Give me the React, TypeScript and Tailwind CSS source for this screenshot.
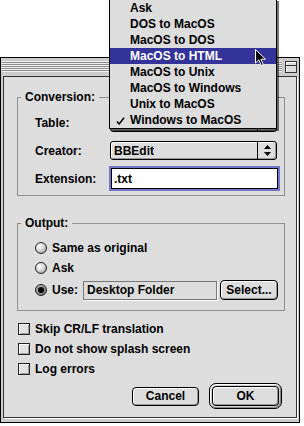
import React from 'react'

const menuItems = [
  'Ask',
  'DOS to MacOS',
  'MacOS to DOS',
  'MacOS to HTML',
  'MacOS to Unix',
  'MacOS to Windows',
  'Unix to MacOS',
  'Windows to MacOS',
]

function Radio({ checked }: { checked?: boolean }) {
  return (
    <span
      className={
        checked
          ? 'flex h-[12px] w-[12px] items-center justify-center rounded-full border border-[#222] bg-[radial-gradient(circle_at_35%_30%,#bbbbbb_0%,#8a8a8a_60%,#555555_100%)]'
          : 'flex h-[12px] w-[12px] items-center justify-center rounded-full border border-[#222] bg-[radial-gradient(circle_at_35%_30%,#ffffff_0%,#dadada_45%,#8a8a8a_100%)]'
      }
    >
      {checked && <span className="h-[6px] w-[6px] rounded-full bg-black" />}
    </span>
  )
}

function Checkbox({ label }: { label: string }) {
  return (
    <div className="flex h-[16px] items-center gap-[5px]">
      <span className="h-[12px] w-[12px] border border-[#222] bg-[#e2e2e2] shadow-[inset_1px_1px_0_#fff,inset_-1px_-1px_0_#a0a0a0]" />
      <span>{label}</span>
    </div>
  )
}

function Popup({ value }: { value?: string }) {
  return (
    <div className="flex h-[19px] w-[167px] items-stretch rounded-[3px] border border-black bg-[#dddddd] shadow-[inset_1px_1px_0_#fff,inset_-1px_-1px_0_#999]">
      <div className="flex flex-1 items-center pl-[3px]">{value}</div>
      <div className="flex w-[19px] items-center justify-center border-l border-black">
        <svg width="7" height="11" viewBox="0 0 7 11">
          <path d="M3.5 0 L7 4 L0 4 Z" fill="#000" />
          <path d="M0 7 L7 7 L3.5 11 Z" fill="#000" />
        </svg>
      </div>
    </div>
  )
}

function Cursor() {
  return (
    <svg width="12" height="18" viewBox="0 0 12 18" className="absolute left-[255px] top-[49px]">
      <path d="M0.5 0.5 L0.5 14 L3.8 10.8 L6.3 16.5 L8.3 15.6 L5.9 10.2 L10.5 10.2 Z" fill="#000" stroke="#fff" strokeWidth="1" />
    </svg>
  )
}

export default function App() {
  return (
    <div className="relative h-[426px] w-[304px] overflow-hidden bg-white font-['Liberation_Sans',Arial,sans-serif] text-[12px] font-bold leading-[16px] text-black">
      {/* window */}
      <div className="mt-[57px] flex h-[366px] w-[300px] flex-col border border-black bg-[#cccccc]">
        <div className="flex h-[17px] items-center gap-[3px] pl-[1px] pr-[2px]">
          <div className="h-[11px] flex-1 bg-[repeating-linear-gradient(to_bottom,#f2f2f2_0px,#f2f2f2_1px,#8c8c8c_1px,#8c8c8c_2px)]" />
          <div className="flex h-[12px] w-[12px] flex-col border border-[#333] bg-[#dddddd] shadow-[inset_1px_1px_0_#fff]">
            <div className="h-[4px] border-b border-[#333]" />
          </div>
        </div>
        <div className="mx-[2px] mb-[4px] mt-[1px] flex flex-1 flex-col border border-[#333] bg-[#dddddd] shadow-[1px_1px_0_#fff]">
          <fieldset className="ml-[13px] mt-[12px] w-[268px] border border-[#8f8f8f]">
            <legend className="ml-[3px] px-[4px]">Conversion:</legend>
            <div className="flex flex-col pl-[17px] pt-[8px] pb-[4px]">
              <div className="flex h-[19px] items-center">
                <span className="w-[75px]">Table:</span>
                <Popup />
              </div>
              <div className="mt-[9px] flex h-[19px] items-center">
                <span className="w-[75px]">Creator:</span>
                <Popup value="BBEdit" />
              </div>
              <div className="mt-[6px] flex h-[25px] items-center">
                <span className="w-[74px]">Extension:</span>
                <div className="flex h-[25px] w-[171px] items-center border-2 border-[#7575c8] bg-white pl-[3px] shadow-[inset_0_0_0_1px_#000]">
                  .txt
                </div>
              </div>
            </div>
          </fieldset>

          <fieldset className="ml-[13px] mt-[19px] w-[268px] border border-[#8f8f8f]">
            <legend className="ml-[3px] px-[4px]">Output:</legend>
            <div className="flex flex-col pl-[17px] pt-[9px] pb-[10px]">
              <div className="flex h-[16px] items-center gap-[5px]">
                <Radio />
                <span>Same as original</span>
              </div>
              <div className="mt-[4px] flex h-[16px] items-center gap-[5px]">
                <Radio />
                <span>Ask</span>
              </div>
              <div className="mt-[4px] flex h-[20px] items-center">
                <Radio checked />
                <span className="ml-[5px] w-[31px]">Use:</span>
                <div className="flex h-[19px] w-[134px] items-center border border-[#777] bg-[#dddddd] pl-[3px] shadow-[1px_1px_0_#fff]">
                  Desktop Folder
                </div>
                <button className="ml-[3px] h-[20px] w-[58px] rounded-[4px] border border-black bg-[#dddddd] shadow-[inset_1px_1px_0_#fff,inset_-1px_-1px_0_#999]">
                  Select...
                </button>
              </div>
            </div>
          </fieldset>

          <div className="mt-[10px] flex flex-col gap-[4px] pl-[14px]">
            <Checkbox label="Skip CR/LF translation" />
            <Checkbox label="Do not show splash screen" />
            <Checkbox label="Log errors" />
          </div>

          <div className="mt-[6px] flex items-center justify-end gap-[10px] pr-[14px]">
            <button className="h-[19px] w-[67px] rounded-[4px] border border-black bg-[#dddddd] shadow-[inset_1px_1px_0_#fff,inset_-1px_-1px_0_#999]">
              Cancel
            </button>
            <div className="rounded-[7px] border border-black bg-[#d0d0d0] p-[2px] shadow-[inset_1px_1px_0_#fff,inset_-1px_-1px_0_#888]">
              <button className="h-[20px] w-[67px] rounded-[4px] border border-black bg-[#dddddd] shadow-[inset_1px_1px_0_#fff,inset_-1px_-1px_0_#999]">
                OK
              </button>
            </div>
          </div>
        </div>
      </div>

      {/* open popup menu */}
      <div className="absolute left-[109px] top-[-1px] w-[168px] border border-black bg-[#dddddd] shadow-[2px_2px_0_rgba(0,0,0,0.55)]">
        {menuItems.map((item, i) => (
          <div
            key={item}
            className={
              i === 3
                ? 'relative flex h-[16px] items-center bg-[#333399] pl-[20px] text-white'
                : 'relative flex h-[16px] items-center pl-[20px]'
            }
          >
            {i === 7 && (
              <svg width="9" height="8" viewBox="0 0 9 8" className="absolute left-[6px] top-[5px]">
                <path d="M1 4.5 L3.2 7 L8 0.8" fill="none" stroke="#000" strokeWidth="1.5" />
              </svg>
            )}
            {item}
          </div>
        ))}
      </div>
      <Cursor />
    </div>
  )
}
